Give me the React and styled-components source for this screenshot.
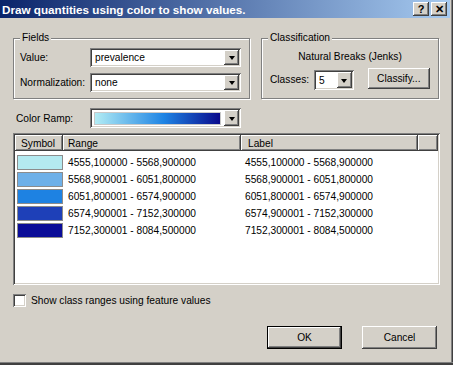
import React from 'react'
import styled, { createGlobalStyle } from 'styled-components'

const Global = createGlobalStyle`
  * { box-sizing: border-box; }
  body {
    margin: 0;
    font-family: "Liberation Sans", Arial, sans-serif;
    font-size: 10.2px;
    color: #000;
  }
`

const raised = `
  background: #d4d0c8;
  box-shadow: inset -1px -1px 0 #404040, inset 1px 1px 0 #fff,
    inset -2px -2px 0 #808080, inset 2px 2px 0 #d4d0c8;
`

const sunken = `
  box-shadow: inset 1px 1px 0 #808080, inset -1px -1px 0 #fff,
    inset 2px 2px 0 #404040, inset -2px -2px 0 #d4d0c8;
`

const Window = styled.div`
  width: 453px;
  height: 365px;
  padding-right: 3px;
  background: #d4d0c8;
  overflow: hidden;
  box-shadow: inset 0 -1px 0 #404040, inset 0 -2px 0 #404040, inset 0 -3px 0 #808080,
    inset -1px 0 0 #404040, inset -2px 0 0 #808080;
`

const TitleBar = styled.div`
  height: 18px;
  display: flex;
  align-items: center;
  justify-content: space-between;
  padding: 0 3px 0 2px;
  background: linear-gradient(to right, #0a246a, #a6caf0);
`

const Title = styled.span`
  color: #fff;
  font-weight: bold;
  font-size: 11.7px;
  white-space: nowrap;
`

const CapButtons = styled.div`
  display: flex;
  gap: 2px;
`

const CapButton = styled.div`
  ${raised}
  width: 16px;
  height: 14px;
  display: flex;
  align-items: center;
  justify-content: center;
  font-weight: bold;
  font-size: 11px;
`

const Body = styled.div`
  padding: 20px 10px 0 13px;
  display: flex;
  flex-direction: column;
`

const TopRow = styled.div`
  display: flex;
  gap: 11px;
`

const Group = styled.div`
  position: relative;
  width: ${p => p.$w}px;
  height: 61px;
  border: 1px solid #808080;
  box-shadow: inset 1px 1px 0 #fff, 1px 1px 0 #fff;
  padding: ${p => p.$pad};
  display: flex;
  flex-direction: column;
`

const Legend = styled.span`
  position: absolute;
  top: -7px;
  left: 6px;
  padding: 0 2px;
  background: #d4d0c8;
  line-height: 12px;
`

const FieldRow = styled.div`
  display: flex;
  align-items: center;
  & + & { margin-top: 6px; }
`

const Label = styled.span`
  width: ${p => p.$w}px;
  flex: none;
  line-height: ${p => p.$lh || 'normal'};
`

const Combo = styled.div`
  ${sunken}
  background: #fff;
  width: ${p => p.$w}px;
  height: ${p => p.$h || 19}px;
  padding: 2px;
  display: flex;
  align-items: center;
  margin-top: ${p => p.$mt || 0}px;
`

const ComboText = styled.span`
  flex: 1;
  padding-left: 3px;
`

const DropButton = styled.div`
  ${raised}
  width: 15px;
  align-self: stretch;
  display: flex;
  align-items: center;
  justify-content: center;
  &::after {
    content: '';
    border-left: 3.5px solid transparent;
    border-right: 3.5px solid transparent;
    border-top: 4px solid #000;
    margin-top: 1px;
  }
`

const Ramp = styled.div`
  flex: 1;
  align-self: stretch;
  margin: 2px 3px 1px 2px;
  border: 1px solid #c8c8c8;
  background: linear-gradient(to right, #b2ecf4, #1e84e4 55%, #0a0a8c);
`

const Method = styled.div`
  text-align: center;
  line-height: 12px;
`

const ClassRow = styled.div`
  display: flex;
  align-items: flex-start;
  margin-top: 5px;
`

const Button = styled.div`
  ${raised}
  width: ${p => p.$w}px;
  height: ${p => p.$h}px;
  display: flex;
  align-items: center;
  justify-content: center;
  margin-left: ${p => p.$ml || 0}px;
  ${p => p.$default && `
    box-shadow: inset 0 0 0 1px #000, inset -2px -2px 0 #404040, inset 2px 2px 0 #fff,
      inset -3px -3px 0 #808080;
  `}
`

const RampRow = styled.div`
  display: flex;
  align-items: center;
  margin-top: 9px;
  padding-left: 3px;
`

const List = styled.div`
  ${sunken}
  background: #fff;
  margin-top: 5px;
  height: 152px;
  padding: 2px;
  display: flex;
  flex-direction: column;
`

const cols = '48px 178px 177px 1fr'

const Header = styled.div`
  display: grid;
  grid-template-columns: ${cols};
  height: 16px;
  background: #d4d0c8;
`

const HeadCell = styled.div`
  ${raised}
  display: flex;
  align-items: center;
  padding-left: ${p => p.$pl || 0}px;
`

const Rows = styled.div`
  padding-top: 3px;
`

const Row = styled.div`
  display: grid;
  grid-template-columns: ${cols};
  height: 17px;
  align-items: center;
`

const Swatch = styled.div`
  margin-left: 2px;
  width: 46px;
  height: 15px;
  border: 1px solid #8c8c8c;
  background: ${p => p.$c};
`

const Cell = styled.span`
  padding-left: ${p => p.$pl}px;
  white-space: nowrap;
`

const CheckRow = styled.div`
  display: flex;
  align-items: center;
  gap: 5px;
  margin-top: 9px;
`

const CheckBox = styled.div`
  ${sunken}
  background: #fff;
  width: 13px;
  height: 13px;
`

const ButtonRow = styled.div`
  display: flex;
  justify-content: flex-end;
  gap: 20px;
  padding-right: 3px;
  margin-top: 19px;
`

const classes = [
  ['#b4eaf0', '4555,100000 - 5568,900000'],
  ['#6eb0e8', '5568,900001 - 6051,800000'],
  ['#1e82e2', '6051,800001 - 6574,900000'],
  ['#1e40b8', '6574,900001 - 7152,300000'],
  ['#0a0c98', '7152,300001 - 8084,500000'],
]

const DropDown = ({ w, h, mt, children }) => (
  <Combo $w={w} $h={h} $mt={mt}>
    {children}
    <DropButton />
  </Combo>
)

export default function App() {
  return (
    <Window>
      <Global />
      <TitleBar>
        <Title>Draw quantities using color to show values.</Title>
        <CapButtons>
          <CapButton>?</CapButton>
          <CapButton>✕</CapButton>
        </CapButtons>
      </TitleBar>
      <Body>
        <TopRow>
          <Group $w={237} $pad="9px 8px 0 6px">
            <Legend>Fields</Legend>
            <FieldRow>
              <Label $w={70}>Value:</Label>
              <DropDown w={151}><ComboText>prevalence</ComboText></DropDown>
            </FieldRow>
            <FieldRow>
              <Label $w={70}>Normalization:</Label>
              <DropDown w={151}><ComboText>none</ComboText></DropDown>
            </FieldRow>
          </Group>
          <Group $w={178} $pad="12px 8px 0 8px">
            <Legend>Classification</Legend>
            <Method>Natural Breaks (Jenks)</Method>
            <ClassRow>
              <Label $w={44} $lh="23px">Classes:</Label>
              <DropDown w={40} h={20} mt={2}><ComboText>5</ComboText></DropDown>
              <Button $w={63} $h={21} $ml={14}>Classify...</Button>
            </ClassRow>
          </Group>
        </TopRow>
        <RampRow>
          <Label $w={74}>Color Ramp:</Label>
          <DropDown w={151} h={20}><Ramp /></DropDown>
        </RampRow>
        <List>
          <Header>
            <HeadCell $pl={6}>Symbol</HeadCell>
            <HeadCell $pl={5}>Range</HeadCell>
            <HeadCell $pl={7}>Label</HeadCell>
            <HeadCell />
          </Header>
          <Rows>
            {classes.map(([c, r]) => (
              <Row key={r}>
                <Swatch $c={c} />
                <Cell $pl={5}>{r}</Cell>
                <Cell $pl={4}>{r}</Cell>
              </Row>
            ))}
          </Rows>
        </List>
        <CheckRow>
          <CheckBox />
          <span>Show class ranges using feature values</span>
        </CheckRow>
        <ButtonRow>
          <Button $w={75} $h={23} $default>OK</Button>
          <Button $w={75} $h={23}>Cancel</Button>
        </ButtonRow>
      </Body>
    </Window>
  )
}
